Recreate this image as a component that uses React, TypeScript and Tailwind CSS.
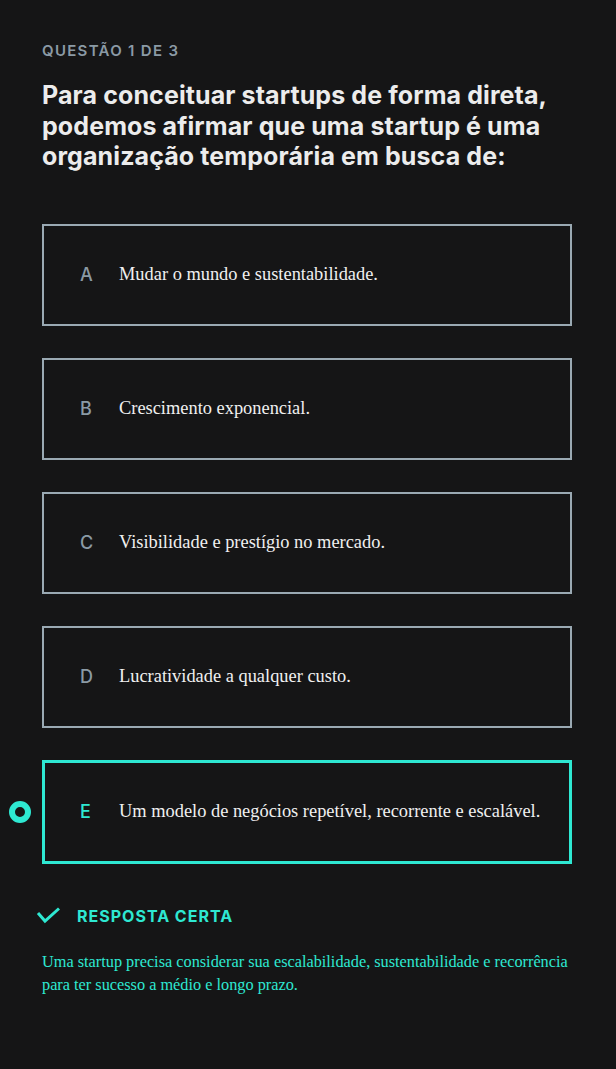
import React from "react";

const options = [
  { l: "A", t: "Mudar o mundo e sustentabilidade." },
  { l: "B", t: "Crescimento exponencial." },
  { l: "C", t: "Visibilidade e prestígio no mercado." },
  { l: "D", t: "Lucratividade a qualquer custo." },
  { l: "E", t: "Um modelo de negócios repetível, recorrente e escalável.", ok: true },
];

export default function App() {
  return (
    <div className="min-h-[1069px] bg-[#151516] pl-[42px] pr-[44px] pt-[41px]">
      <div className="font-['Inter',sans-serif] font-semibold text-[15px] leading-[20px] tracking-[1.3px] text-[#8b9aa5]">
        QUESTÃO 1 DE 3
      </div>
      <h1 className="mt-[19px] font-['Inter',sans-serif] font-bold text-[25px] leading-[30.5px] text-[#ececec] tracking-[0.1px]">
        Para conceituar startups de forma direta, podemos afirmar que uma startup é uma organização temporária em busca de:
      </h1>
      <div className="mt-[52px] flex flex-col gap-[32px]">
        {options.map((o) =>
          o.ok ? (
            <div
              key={o.l}
              className="relative flex h-[104px] items-center border-[3px] border-[#2ee8d2] pl-[35px]"
            >
              <span className="absolute left-[-36px] top-1/2 h-[22px] w-[22px] -translate-y-1/2 rounded-full border-[6px] border-[#2ee8d2]" />
              <span className="w-[39px] font-['Inter',sans-serif] text-[18px] font-medium text-[#2ee8d2]">{o.l}</span>
              <span className="font-['Liberation_Serif',serif] text-[18.4px] text-[#f0f0f0]">{o.t}</span>
            </div>
          ) : (
            <div
              key={o.l}
              className="flex h-[102px] items-center border-2 border-[#9aa9b3] pl-[36px]"
            >
              <span className="w-[39px] font-['Inter',sans-serif] text-[18px] font-medium text-[#8b9aa5]">{o.l}</span>
              <span className="font-['Liberation_Serif',serif] text-[18.4px] text-[#f0f0f0]">{o.t}</span>
            </div>
          )
        )}
      </div>
      <div className="mt-[42px] flex items-center h-[20px]">
        <svg width="25" height="17" viewBox="0 0 25 17" className="ml-[-6px]" fill="none">
          <polyline points="2,6 9,14 23,1.5" stroke="#2ee8d2" strokeWidth="3" />
        </svg>
        <span className="ml-[16px] font-['Inter',sans-serif] font-bold text-[16px] leading-[20px] tracking-[1px] text-[#2ee8d2]">
          RESPOSTA CERTA
        </span>
      </div>
      <p className="mt-[24px] font-['Liberation_Serif',serif] text-[16.3px] leading-[23px] text-[#2ee8d2]">
        Uma startup precisa considerar sua escalabilidade, sustentabilidade e recorrência para ter sucesso a médio e longo prazo.
      </p>
    </div>
  );
}
